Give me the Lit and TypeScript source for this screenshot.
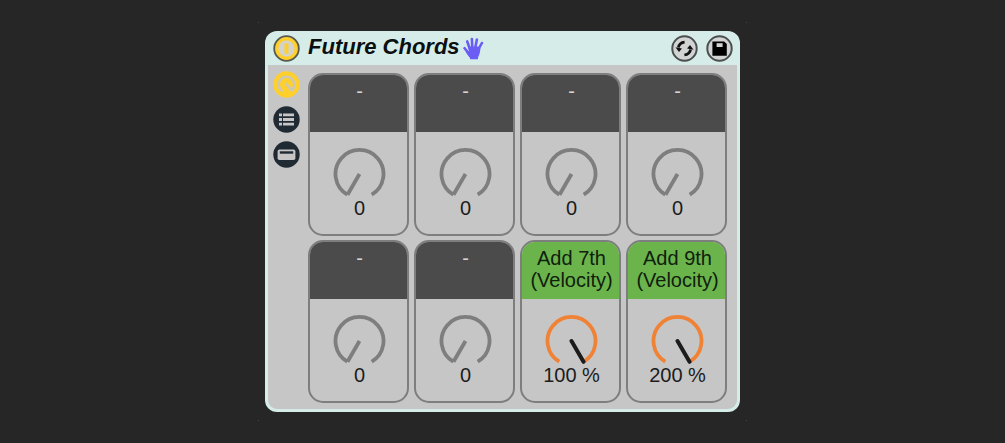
import { LitElement, html, svg, css } from "lit";
import { customElement, property, state } from "lit/decorators.js";
import { classMap } from "lit/directives/class-map.js";

interface Macro {
  lines: string[];
  value: number;
  max: number;
  unit: string;
  mapped: boolean;
}

const empty = (): Macro => ({ lines: ["-"], value: 0, max: 127, unit: "", mapped: false });

@customElement("macro-knob")
export class MacroKnob extends LitElement {
  static styles = css`
    :host {
      display: block;
      min-width: 0;
    }
    .cell {
      box-sizing: border-box;
      height: 100%;
      border: 2px solid #7e7e7e;
      border-radius: 15px;
      overflow: hidden;
      background: #c6c6c6;
      color: #1c1c1c;
      font-size: 20px;
      line-height: 22px;
      text-align: center;
    }
    .name {
      display: block;
      box-sizing: border-box;
      height: 57px;
      padding: 5px 0 0 2px;
      background: #4b4b4b;
      color: #d4d4d4;
      white-space: nowrap;
    }
    .mapped .name {
      background: #6bb44c;
      color: #10200c;
    }
    .line {
      display: block;
    }
    .dial {
      position: relative;
      width: 56px;
      height: 50px;
      margin: 15px auto 0;
    }
    .dial svg {
      display: block;
    }
    .ring,
    .needle {
      fill: none;
      stroke: #7e7e7e;
      stroke-width: 3.8;
      stroke-linejoin: round;
    }
    .mapped .ring {
      stroke: #f08236;
    }
    .mapped .needle {
      stroke: #1c1c1c;
      stroke-width: 4;
      stroke-linecap: round;
    }
    input {
      position: absolute;
      inset: 0;
      width: 100%;
      height: 100%;
      margin: 0;
      opacity: 0;
      cursor: pointer;
    }
    .value {
      display: block;
      padding: 0 0 15px 2px;
    }
  `;

  @property({ attribute: false }) macro: Macro = empty();
  @state() private current: number | null = null;

  private onInput(e: Event) {
    this.current = Number((e.target as HTMLInputElement).value);
  }

  render() {
    const { lines, value, max, unit, mapped } = this.macro;
    const now = this.current ?? value;
    const angle = ((210 + (now / max) * 300) * Math.PI) / 180;
    const x = 28.5 + 24 * Math.sin(angle);
    const y = 27 - 24 * Math.cos(angle);
    return html`
      <div class=${classMap({ cell: true, mapped })}>
        <label class="name" for="dial">${lines.map((l) => html`<span class="line">${l}</span>`)}</label>
        <div class="dial">
          <svg width="56" height="50" viewBox="0 0 56 50" aria-hidden="true">
            <path class="ring" d="M16.3 47.6A24 24 0 1 1 40.7 47.6" />
            ${svg`<path class="needle" d="M28.5 27L${x} ${y}" />`}
          </svg>
          <input id="dial" type="range" min="0" max=${max} .value=${String(now)} @input=${this.onInput} />
        </div>
        <output class="value" for="dial">${now}${unit}</output>
      </div>
    `;
  }
}

@customElement("app-root")
export class AppRoot extends LitElement {
  static styles = css`
    :host {
      display: flex;
      align-items: center;
      justify-content: center;
      min-height: 100vh;
      background: #262626;
      font-family: "Liberation Sans", Arial, sans-serif;
    }
    .frame {
      box-sizing: border-box;
      width: 100%;
      max-width: 489px;
      padding: 9px 7px;
      background:
        linear-gradient(#484848, #484848) left top,
        linear-gradient(#484848, #484848) right top,
        linear-gradient(#484848, #484848) left bottom,
        linear-gradient(#484848, #484848) right bottom;
      background-size: 1px 1px;
      background-repeat: no-repeat;
    }
    .device {
      padding: 0 3px 3px;
      border-radius: 12px;
      background: #d5ece8;
    }
    header {
      display: flex;
      align-items: center;
      height: 34px;
      padding: 0 4px 0 5px;
    }
    h1 {
      margin: 0 0 0 8px;
      padding-bottom: 2px;
      color: #0b0f10;
      font-size: 22px;
      line-height: 24px;
      font-style: italic;
      font-weight: bold;
      white-space: nowrap;
    }
    .hand {
      display: block;
      margin-left: 3px;
    }
    .tools {
      display: flex;
      gap: 8px;
      margin-left: auto;
    }
    button {
      display: block;
      padding: 0;
      border: 0;
      border-radius: 50%;
      background: none;
      cursor: pointer;
    }
    button svg {
      display: block;
    }
    .body {
      display: flex;
      gap: 8px;
      padding: 6px 10px 6px 5px;
      border-radius: 0 0 9px 9px;
      background: #c6c6c6;
    }
    nav {
      display: flex;
      flex-direction: column;
      gap: 8px;
    }
    .macros {
      flex: 1;
      display: grid;
      grid-template-columns: repeat(4, minmax(0, 1fr));
      gap: 4px 5px;
      padding-top: 2px;
    }
  `;

  private macros: Macro[] = [
    empty(),
    empty(),
    empty(),
    empty(),
    empty(),
    empty(),
    { lines: ["Add 7th", "(Velocity)"], value: 100, max: 100, unit: " %", mapped: true },
    { lines: ["Add 9th", "(Velocity)"], value: 200, max: 200, unit: " %", mapped: true },
  ];

  render() {
    return html`
      <main class="frame">
        <section class="device">
          <header>
            <button aria-label="Device on">
              <svg width="27" height="27" viewBox="0 0 27 27">
                <circle cx="13.5" cy="13.5" r="12.3" fill="#ffd02c" stroke="#555a50" stroke-width="1.8" />
                <circle cx="13.5" cy="13.5" r="8" fill="#d2d3cf" />
                <path d="M13.5 8.3v10.4" stroke="#ffd02c" stroke-width="4" />
              </svg>
            </button>
            <h1>Future Chords</h1>
            <svg class="hand" width="21" height="23" viewBox="0 0 21 23" aria-hidden="true">
              <path
                d="M6.8 12L4.2 4.4M9.3 11L8.9 2M12.2 11L13.9 2.6M14.8 13.5L18.9 6M6.5 17.2L1.6 11.2"
                fill="none"
                stroke="#6a5cf5"
                stroke-linecap="round"
                stroke-width="2.6"
              />
              <path
                d="M5.2 9.4H15.4L17.4 11C17.2 15 16.6 17.5 15.2 20L14.9 22.3H7.2L6.8 20.6C5.4 19.4 4 17.4 2.6 14.6L5.9 14Z"
                fill="#6a5cf5"
              />
            </svg>
            <div class="tools">
              <button aria-label="Hot-swap preset">
                <svg width="27" height="27" viewBox="0 0 27 27">
                  <circle cx="13.5" cy="13.5" r="12.2" fill="#d2d3d3" stroke="#4a4e4e" stroke-width="2" />
                  <path d="M13.6 7.1C10.2 7.4 8 9.4 7.4 12.6M13.4 19.9C16.8 19.6 19 17.6 19.6 14.4" fill="none" stroke="#111" stroke-width="2.8" />
                  <path d="M4.4 12.2L11 13.6L8 17ZM22.6 14.8L16 13.4L19 10Z" fill="#111" />
                </svg>
              </button>
              <button aria-label="Save preset">
                <svg width="27" height="27" viewBox="0 0 27 27">
                  <circle cx="13.5" cy="13.5" r="12.2" fill="#d2d3d3" stroke="#4a4e4e" stroke-width="2" />
                  <path d="M6.4 6.4H18.2L20.8 9V20.8H6.4Z" fill="#000" />
                  <path d="M10.6 8.2H16.6V12H10.6Z" fill="#d2d3d3" />
                </svg>
              </button>
            </div>
          </header>
          <div class="body">
            <nav aria-label="Views">
              <button aria-label="Show macros">
                <svg width="27" height="27" viewBox="0 0 27 27">
                  <circle cx="13.5" cy="13.5" r="13.2" fill="#ffd02c" />
                  <path
                    d="M8.6 19.6A7.8 7.8 0 1 1 18.6 19.4L13.4 13"
                    fill="none"
                    stroke="#cdc8b4"
                    stroke-width="2.6"
                    stroke-linejoin="round"
                    stroke-linecap="round"
                  />
                </svg>
              </button>
              <button aria-label="Show chain list">
                <svg width="27" height="27" viewBox="0 0 27 27">
                  <circle cx="13.5" cy="13.5" r="13.2" fill="#1f2a33" />
                  <path d="M6 8.9h3M6 13.5h3M6 18.1h3M10 8.9h11M10 13.5h11M10 18.1h11" stroke="#c6c6c6" stroke-width="2.8" />
                </svg>
              </button>
              <button aria-label="Show devices">
                <svg width="27" height="27" viewBox="0 0 27 27">
                  <circle cx="13.5" cy="13.5" r="13.2" fill="#1f2a33" />
                  <rect x="4.6" y="8.6" width="17.8" height="10.4" rx="1.8" fill="#c6c6c6" />
                  <path d="M6.8 11.5h13.4" stroke="#1f2a33" stroke-width="2.4" />
                </svg>
              </button>
            </nav>
            <div class="macros">
              ${this.macros.map((m) => html`<macro-knob .macro=${m}></macro-knob>`)}
            </div>
          </div>
        </section>
      </main>
    `;
  }
}
